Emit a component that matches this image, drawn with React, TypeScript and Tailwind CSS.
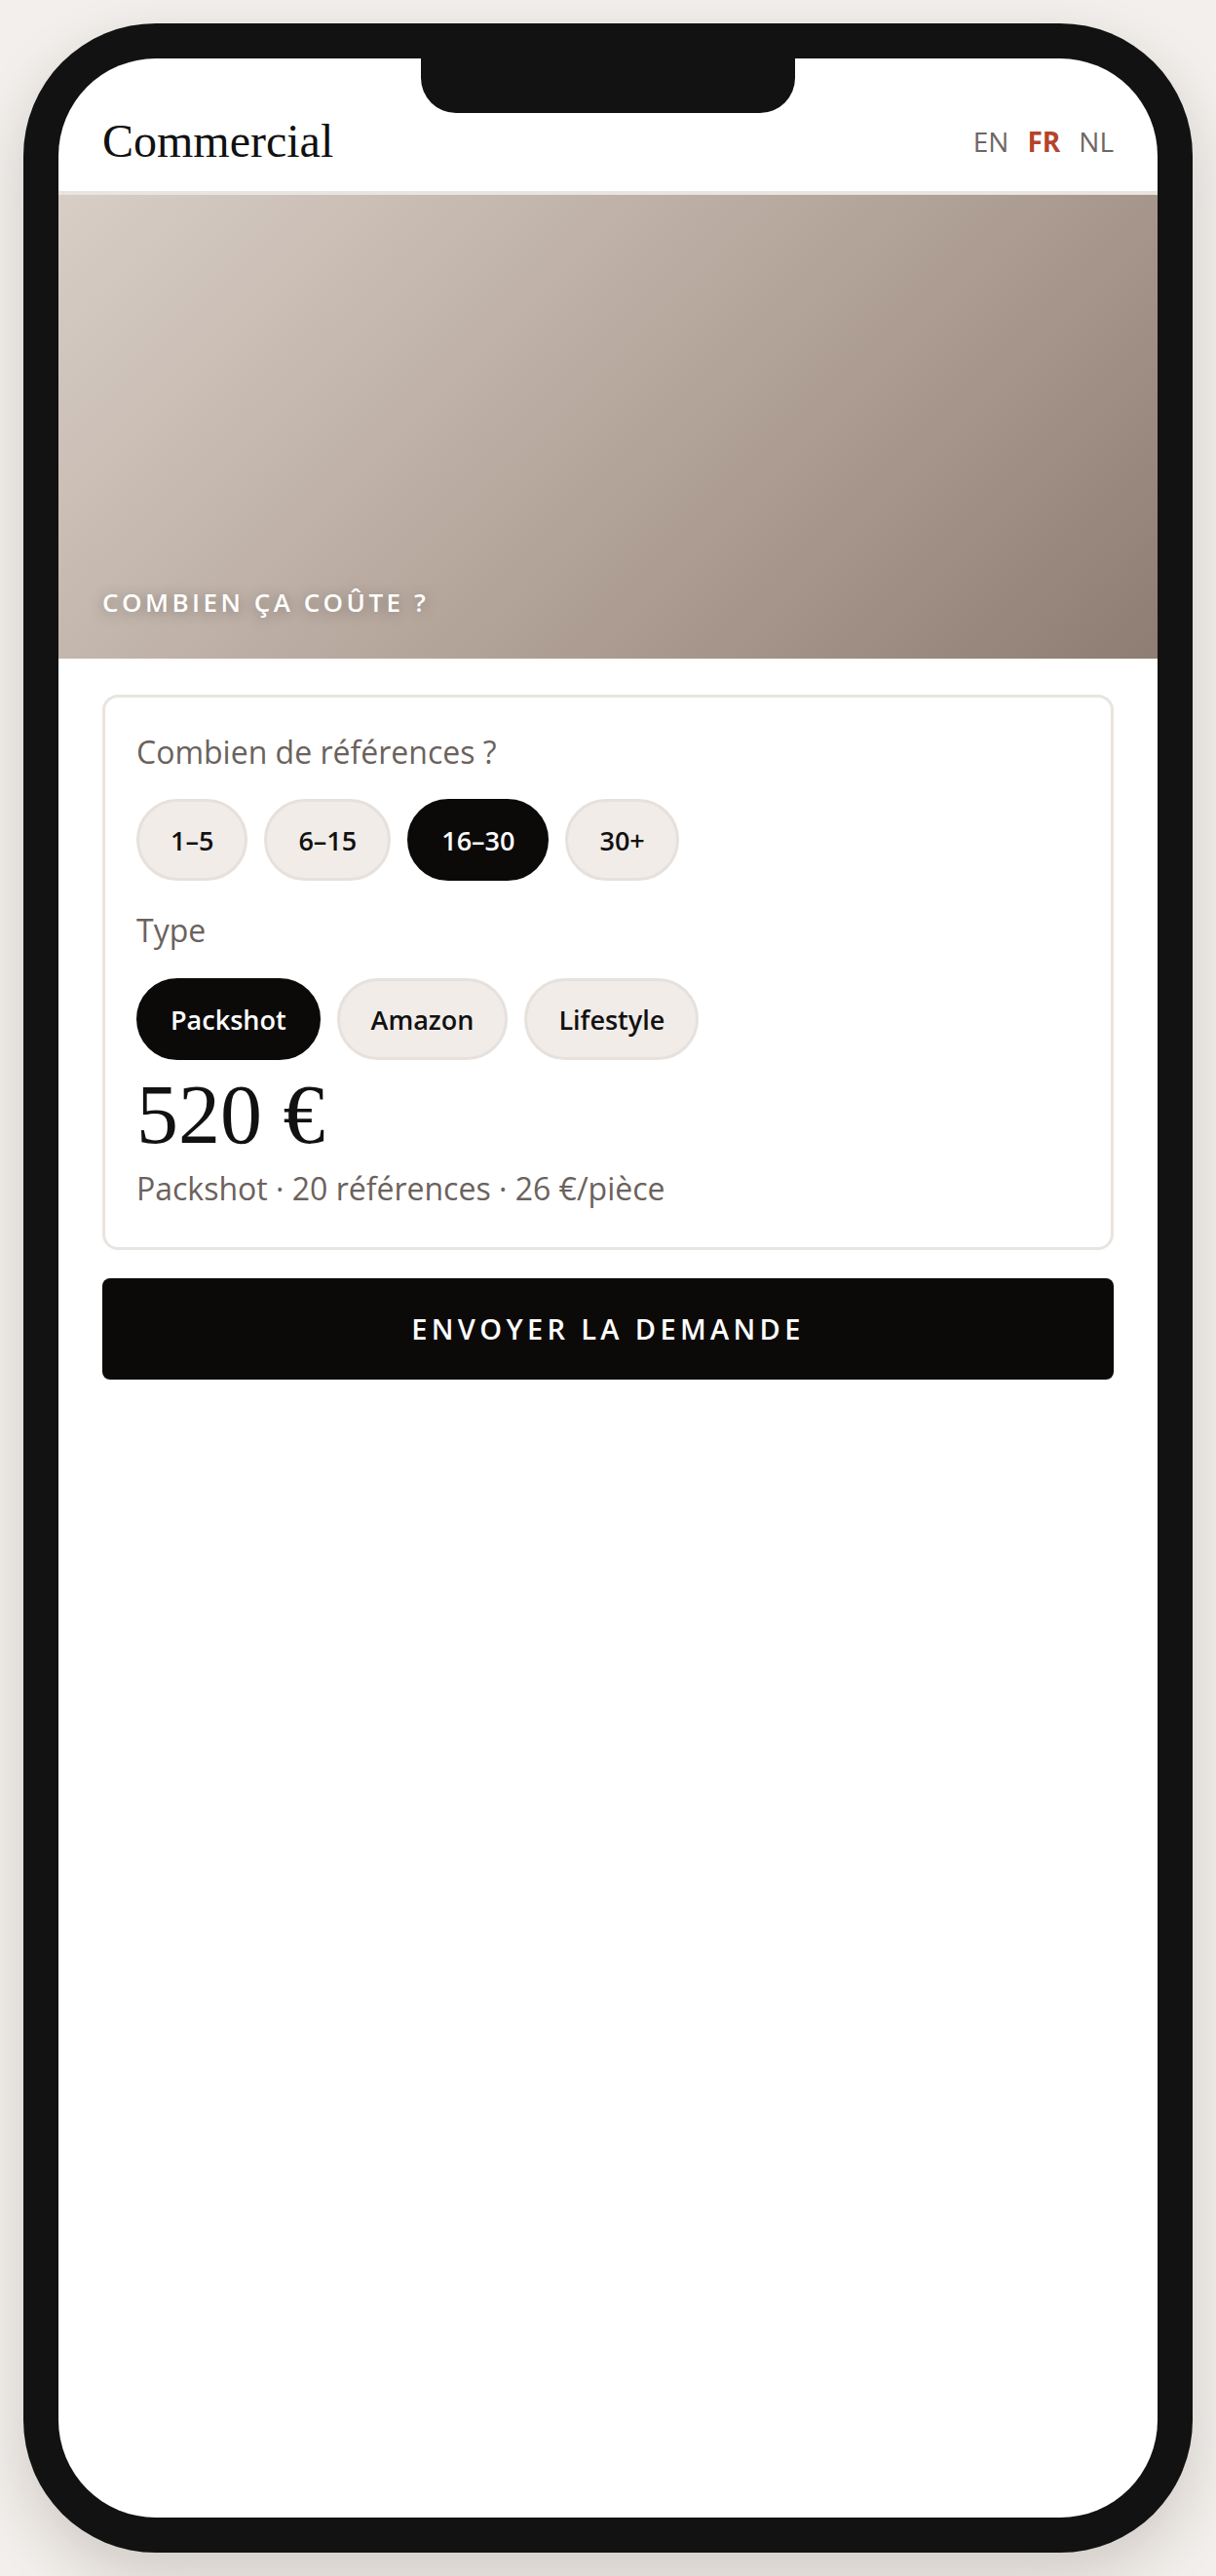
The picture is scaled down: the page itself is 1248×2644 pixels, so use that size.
import React from "react";

const sans = "font-['Open_Sans','Noto_Sans',sans-serif]";
const serif = "font-['Liberation_Serif','Times_New_Roman',serif]";

function Pill({ label, active }: { label: string; active?: boolean }) {
  return (
    <div
      className={
        "h-[84px] flex items-center px-[32px] rounded-full border-[3px] text-[27px] leading-none font-semibold " +
        (active
          ? "bg-[#0c0a09] border-[#0c0a09] text-white"
          : "bg-[#f1ece8] border-[#e6e1dd] text-[#111111]")
      }
    >
      {label}
    </div>
  );
}

export default function App() {
  return (
    <div className={"min-h-screen bg-[#f2efec] py-[24px] flex justify-center " + sans}>
      <div className="relative w-[1200px] h-[2596px] bg-[#121212] rounded-[136px] p-[36px] shadow-[0_24px_60px_rgba(60,40,30,0.18)]">
        <div className="relative w-full h-full bg-white rounded-[100px] overflow-hidden">
          {/* notch */}
          <div className="absolute top-0 left-1/2 -translate-x-1/2 w-[384px] h-[56px] bg-[#121212] rounded-b-[36px] z-10" />

          {/* header */}
          <header className="h-[140px] border-b-4 border-[#e9e4e0] pt-[34px] px-[45px] flex items-center justify-between">
            <div className={"text-[48px] leading-none text-[#111111] " + serif}>Commercial</div>
            <div className="flex items-center gap-[19px] text-[28px] leading-none">
              <span className="text-[#6e6661]">EN</span>
              <span className="text-[#b4442a] font-bold">FR</span>
              <span className="text-[#6e6661]">NL</span>
            </div>
          </header>

          {/* hero */}
          <section className="h-[476px] bg-[linear-gradient(135deg,#d8cec6_0%,#b6a79d_50%,#8e7d72_100%)] flex items-end px-[45px] pb-[45px]">
            <h2 className="text-[26px] leading-none font-semibold tracking-[0.135em] text-white [text-shadow:0_2px_14px_rgba(0,0,0,0.35)]">
              COMBIEN ÇA COÛTE ?
            </h2>
          </section>

          {/* content */}
          <main className="px-[45px] pt-[37px]">
            <div className="border-[3px] border-[#e8e4e0] rounded-[16px] px-[32px] pt-[32px] pb-[36px]">
              <div className="text-[32px] leading-[1.5] text-[#6b625c]">Combien de références ?</div>
              <div className="mt-[24px] flex gap-[17px]">
                <Pill label="1–5" />
                <Pill label="6–15" />
                <Pill label="16–30" active />
                <Pill label="30+" />
              </div>
              <div className="mt-[27px] text-[32px] leading-[1.5] text-[#6b625c]">Type</div>
              <div className="mt-[25px] flex gap-[17px]">
                <Pill label="Packshot" active />
                <Pill label="Amazon" />
                <Pill label="Lifestyle" />
              </div>
              <div className={"mt-[13px] text-[86px] leading-none text-[#111111] " + serif}>520 €</div>
              <div className="mt-[9px] text-[32px] leading-[1.5] text-[#6b625c]">
                Packshot · 20 références · 26 €/pièce
              </div>
            </div>

            <button className="mt-[29px] w-full h-[104px] rounded-lg bg-[#0c0a09] text-white text-[29px] font-semibold tracking-[0.15em] flex items-center justify-center">
              ENVOYER LA DEMANDE
            </button>
          </main>
        </div>
      </div>
    </div>
  );
}
